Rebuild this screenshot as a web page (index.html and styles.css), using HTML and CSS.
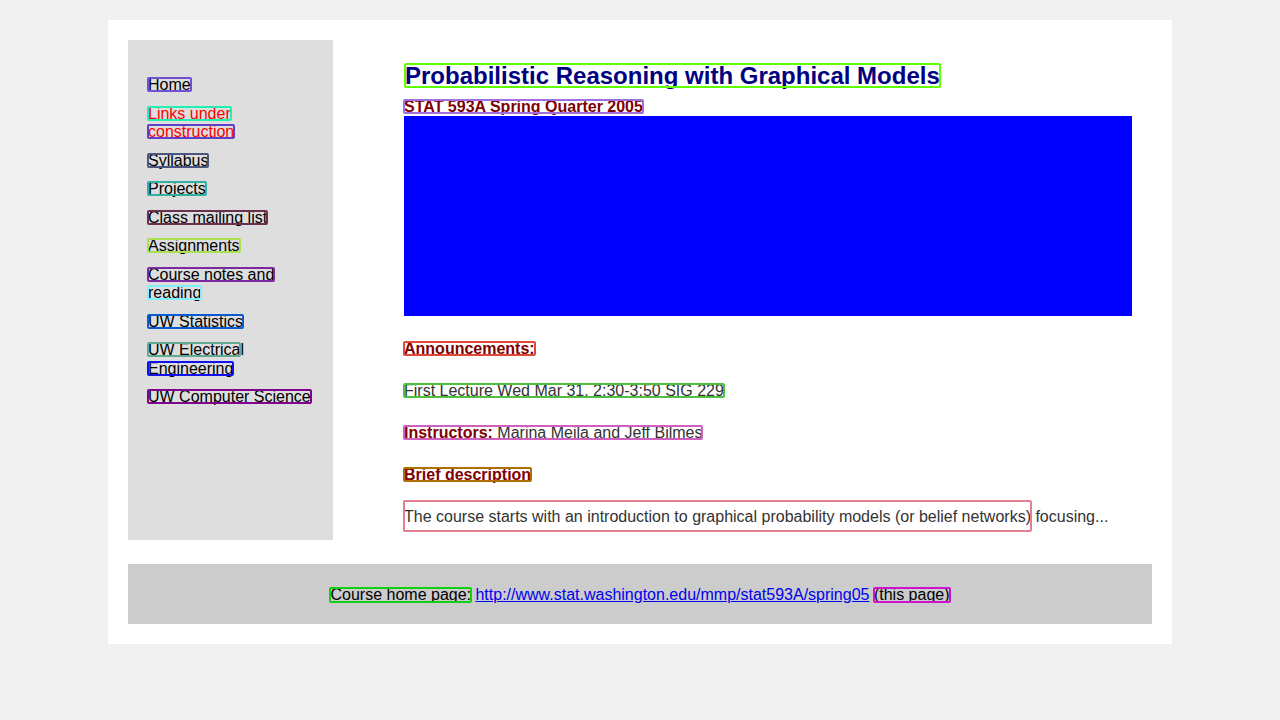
FILE: index.html
```html
<!DOCTYPE html>
<html lang="en">
<head>
<meta charset="utf-8">
<title>Probabilistic Reasoning with Graphical Models</title>
<link rel="stylesheet" href="styles.css">
</head>
<body>
<div class="page">
  <div class="layout">
    <nav class="side">
      <ul class="menu">
        <li><a class="bx c1" href="#">Home</a></li>
        <li class="warn"><span class="bx c2">Links under</span> <span class="bx c3">construction</span></li>
        <li><a class="bx c4" href="#">Syllabus</a></li>
        <li><a class="bx c5" href="#">Projects</a></li>
        <li><a class="bx c6" href="#">Class mailing list</a></li>
        <li><a class="bx c7" href="#">Assignments</a></li>
        <li><a href="#"><span class="bx c8">Course notes and</span> <span class="bx c9">reading</span></a></li>
        <li><a class="bx c10" href="#">UW Statistics</a></li>
        <li><a href="#"><span class="bx c11">UW Electrica</span>l <span class="bx c12">Engineering</span></a></li>
        <li><a class="bx c13" href="#">UW Computer Science</a></li>
      </ul>
    </nav>
    <main class="main">
      <h1 class="title"><span class="bx c14">Probabilistic Reasoning with Graphical Models</span></h1>
      <div class="sub"><span class="bx c15">STAT 593A Spring Quarter 2005</span></div>
      <div class="banner"></div>
      <p class="first"><strong class="bx c16">Announcements:</strong></p>
      <p><span class="bx c17">First Lecture Wed Mar 31, 2:30-3:50 SIG 229</span></p>
      <p><span class="bx c18"><strong>Instructors:</strong> Marina Meila and Jeff Bilmes</span></p>
      <p><strong class="bx c19">Brief description</strong></p>
      <p><span class="bx tall c20">The course starts with an introduction to graphical probability models (or belief networks)</span> focusing...</p>
    </main>
  </div>
  <footer class="foot">
    <span class="bx c21">Course home page:</span>&nbsp;<a href="#">http://www.stat.washington.edu/mmp/stat593A/spring05</a>&nbsp;<span class="bx c22">(this page)</span>
  </footer>
</div>
</body>
</html>
```
FILE: styles.css
```css
html, body {
  margin: 0;
  padding: 0;
}
body {
  background: #f0f0f0;
  font-family: "Liberation Sans", Arial, sans-serif;
  font-size: 16px;
  color: #333;
  padding-top: 20px;
}
.page {
  width: 1064px;
  box-sizing: border-box;
  margin: 0 auto;
  padding: 20px;
  background: #fff;
}
.layout {
  display: grid;
  grid-template-columns: 205px 1fr;
  column-gap: 71px;
}
.side {
  background: #dedede;
  min-height: 500px;
  box-sizing: border-box;
  padding: 36px 20px 20px 20px;
}
.menu {
  list-style: none;
  margin: 0;
  padding: 0;
}
.menu li {
  margin-bottom: 10px;
  line-height: 18.5px;
  color: #000;
}
.menu a {
  color: #000;
  text-decoration: none;
}
.menu li.warn {
  color: #ff0000;
}
.main {
  padding: 22px 20px 0 0;
}
.title {
  margin: 0 0 8px 1px;
  font-size: 24px;
  font-weight: bold;
  color: #000080;
}
.sub {
  font-weight: bold;
  color: #800000;
}
.banner {
  height: 200px;
  background: #0000ff;
}
.main p {
  margin: 24px 0 0 0;
}
.main p.first {
  margin-top: 24px;
}
.main strong {
  color: #800000;
}
.foot {
  margin-top: 24px;
  height: 60px;
  box-sizing: border-box;
  padding-top: 2px;
  background: #cccccc;
  color: #000;
  display: flex;
  align-items: center;
  justify-content: center;
}
.foot a {
  color: #0000ee;
}

/* annotation boxes over text fragments */
.bx {
  position: relative;
}
.bx::after {
  content: "";
  position: absolute;
  left: -1px;
  right: -1px;
  top: 1px;
  bottom: 1px;
  border: 2px solid var(--c);
  border-radius: 2px;
  pointer-events: none;
}
.bx.tall::after {
  top: -8px;
  bottom: -7px;
}
.c1 { --c: #7050d0; }
.c2 { --c: #20f0b0; }
.c3 { --c: #6040c8; }
.c4 { --c: #4a5580; }
.c5 { --c: #30b0a0; }
.c6 { --c: #6a3050; }
.c7 { --c: #a8e050; }
.c8 { --c: #7a2aa0; }
.c9 { --c: #80f0ff; }
.c10 { --c: #0a5ad0; }
.c11 { --c: #60a890; }
.c12 { --c: #1010f0; }
.c13 { --c: #800090; }
.c14 { --c: #60ff00; }
.c15 { --c: #a070e0; }
.c16 { --c: #e04838; }
.c17 { --c: #50c040; }
.c18 { --c: #d060c0; }
.c19 { --c: #b07000; }
.c20 { --c: #e08090; }
.c21 { --c: #10d010; }
.c22 { --c: #d010d0; }
```
